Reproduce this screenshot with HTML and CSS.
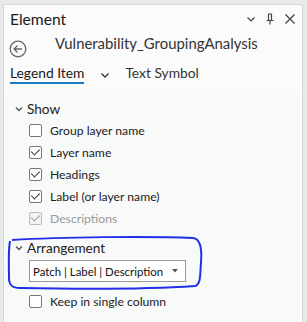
FILE: index.html
```html
<!DOCTYPE html>
<html>
<head>
	<meta charset="UTF-8">
	<title>Element</title>
	<link rel="stylesheet" href="styles.css">
</head>
<body>
	<div class="panel">
		<div class="title-bar">
			<span class="title">Element</span>
			<span class="title-tools">
				<svg width="10" height="10" viewBox="0 0 10 10"><path d="M1.5 3.5 L5 7 L8.5 3.5" fill="none" stroke="#444" stroke-width="1.2"/></svg>
				<svg width="10" height="12" viewBox="0 0 10 12"><path d="M3 1 H7 M3.5 1 V7 M6.5 1 V7 M1.5 7.5 H8.5 M5 7.5 V11.5" fill="none" stroke="#444" stroke-width="1.2"/></svg>
				<svg width="12" height="12" viewBox="0 0 12 12"><path d="M1.5 1.5 L10.5 10.5 M10.5 1.5 L1.5 10.5" fill="none" stroke="#444" stroke-width="1.3"/></svg>
			</span>
		</div>
		<div class="layer-row">
			<svg class="back" width="18" height="18" viewBox="0 0 18 18"><circle cx="9" cy="9" r="7.8" fill="none" stroke="#666" stroke-width="1.3"/><path d="M13 9 H5 M8.5 5.5 L5 9 L8.5 12.5" fill="none" stroke="#666" stroke-width="1.3"/></svg>
			<span class="layer-name">Vulnerability_GroupingAnalysis</span>
		</div>
		<div class="tabs">
			<span class="tab active">Legend Item</span>
			<svg class="tab-more" width="10" height="10" viewBox="0 0 10 10"><path d="M1.5 3.5 L5 7 L8.5 3.5" fill="none" stroke="#333" stroke-width="1.3"/></svg>
			<span class="tab">Text Symbol</span>
		</div>
		<div class="content">
			<div class="group-head">
				<svg class="caret" width="8" height="8" viewBox="0 0 8 8"><path d="M1 2.5 L4 5.5 L7 2.5" fill="none" stroke="#555" stroke-width="1.4"/></svg>
				<span>Show</span>
			</div>
			<div class="check-row"><span class="box"></span>Group layer name</div>
			<div class="check-row"><span class="box checked"></span>Layer name</div>
			<div class="check-row"><span class="box checked"></span>Headings</div>
			<div class="check-row"><span class="box checked"></span>Label (or layer name)</div>
			<div class="check-row disabled"><span class="box checked"></span>Descriptions</div>

			<div class="group-head arrangement">
				<svg class="caret" width="8" height="8" viewBox="0 0 8 8"><path d="M1 2.5 L4 5.5 L7 2.5" fill="none" stroke="#555" stroke-width="1.4"/></svg>
				<span>Arrangement</span>
			</div>
			<div class="select">
				<span>Patch | Label | Description</span>
				<svg width="6" height="4" viewBox="0 0 6 4"><path d="M0 0 H6 L3 3.5 Z" fill="#555"/></svg>
			</div>
			<div class="check-row single"><span class="box"></span>Keep in single column</div>
		</div>
	</div>
	<svg class="scribble" width="307" height="322" viewBox="0 0 307 322">
		<path d="M12 240 C60 237 150 236 193 238 C201 239 202 250 201 262 C200 275 201 284 195 286 C150 289 70 289 20 288 C12 288 9 285 9 278 C9 265 8 252 10 241" fill="none" stroke="#1f2fe8" stroke-width="2"/>
	</svg>
</body>
</html>
```

FILE: styles.css
```css
body {
	margin: 0;
	background-color: #e9e9e9;
	font-family: Lato, "Noto Sans", sans-serif;
	color: #222;
	height: 322px;
	overflow: hidden;
}

.panel {
	margin: 4px 4px 0 3px;
	height: 318px;
	background-color: #fbfbfb;
	border: 1px solid #d8d8d8;
	border-bottom: none;
	border-top-right-radius: 4px;
	box-sizing: border-box;
	display: flex;
	flex-direction: column;
}

.title-bar {
	display: flex;
	align-items: center;
	justify-content: space-between;
	height: 28px;
	padding: 0 6px 0 6px;
}

.title {
	font-size: 15.6px;
	color: #1a1a1a;
}

.title-tools {
	display: flex;
	align-items: center;
	gap: 9px;
}

.layer-row {
	display: flex;
	align-items: center;
	height: 26px;
	padding-left: 5px;
}

.back {
	margin-top: 6px;
}

.layer-name {
	font-size: 14.9px;
	color: #333;
	margin-left: 28px;
	margin-top: -6px;
}

.tabs {
	display: flex;
	align-items: flex-start;
	height: 34px;
	padding: 5px 0 0 6px;
	box-sizing: border-box;
	font-size: 13.8px;
}

.tab {
	color: #333;
	padding-bottom: 1px;
}

.tab.active {
	color: #1a1a1a;
	border-bottom: 2px solid #1b7ac2;
}

.tab-more {
	margin: 6px 15px 0 16px;
}

.content {
	flex: 1;
	background-color: #f8f9f9;
	padding: 6px 0 0 13px;
}

.group-head {
	display: flex;
	align-items: center;
	font-size: 13.6px;
	color: #222;
	height: 20px;
	margin-left: -2px;
}

.caret {
	margin-right: 4px;
}

.check-row {
	display: flex;
	align-items: center;
	height: 22px;
	padding-left: 12px;
	font-size: 12.2px;
	color: #222;
	white-space: nowrap;
}

.box {
	width: 13px;
	height: 13px;
	border: 1px solid #777;
	border-radius: 2px;
	background-color: #fff;
	box-sizing: border-box;
	margin-right: 8px;
	position: relative;
}

.box.checked::after {
	content: "";
	position: absolute;
	left: 3px;
	top: 0px;
	width: 4px;
	height: 7px;
	border-right: 1.5px solid #333;
	border-bottom: 1.5px solid #333;
	transform: rotate(45deg);
}

.check-row.disabled {
	color: #999;
}

.check-row.disabled .box {
	border-color: #bbb;
	background-color: #f3f3f3;
}

.check-row.disabled .box::after {
	border-color: #999;
}

.arrangement {
	margin-top: 9px;
}

.select {
	display: flex;
	align-items: center;
	justify-content: space-between;
	width: 157px;
	height: 22px;
	margin: 2px 0 0 12px;
	padding: 0 7px 0 3px;
	box-sizing: border-box;
	border: 1px solid #999;
	background-color: #fff;
	font-size: 11.4px;
	color: #111;
	white-space: nowrap;
}

.check-row.single {
	margin-top: 8px;
}

.scribble {
	position: absolute;
	left: 0;
	top: 0;
	pointer-events: none;
}
```
